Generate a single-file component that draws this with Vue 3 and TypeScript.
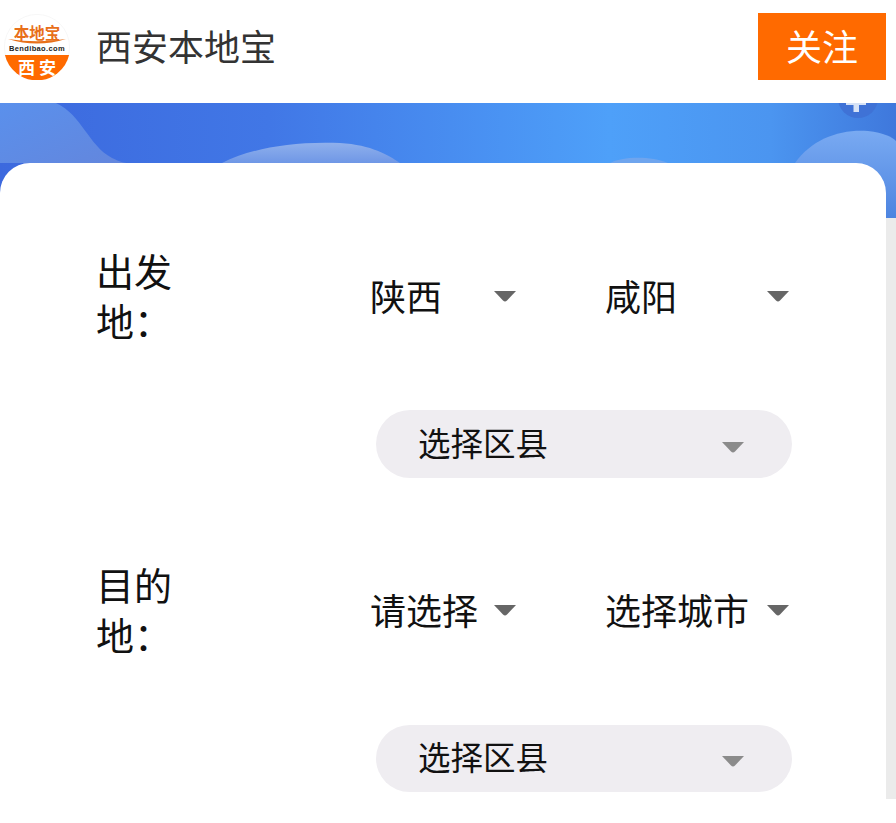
<template>
  <div class="page">
    <header class="topbar">
      <svg class="logo" viewBox="0 0 66 66">
        <circle cx="33" cy="33" r="32.6" fill="#fff" stroke="#f1f1f1" stroke-width="0.6" />
        <path d="M0.9 41 H65.1 A33 33 0 0 1 0.9 41 Z" fill="#ff6a00" />
        <path d="M4 25 Q33 34 62 25 Q33 29.5 4 25 Z" fill="#e8701a" />
        <text x="33" y="25" text-anchor="middle" class="logo-top">本地宝</text>
        <text x="33" y="37" text-anchor="middle" class="logo-mid">Bendibao.com</text>
        <text x="33" y="60" text-anchor="middle" class="logo-city">西 安</text>
      </svg>
      <span class="site-name">西安本地宝</span>
      <button class="follow"><span>关注</span></button>
    </header>

    <div class="hero">
      <svg class="hero-art" viewBox="0 0 896 115" preserveAspectRatio="none">
        <defs>
          <linearGradient id="heroBg" x1="0" y1="0" x2="1" y2="0">
            <stop offset="0" stop-color="#3c69de" />
            <stop offset="0.3" stop-color="#4177e6" />
            <stop offset="0.68" stop-color="#4ea0f9" />
            <stop offset="0.86" stop-color="#4b95f0" />
            <stop offset="1" stop-color="#3f78dc" />
          </linearGradient>
          <linearGradient id="blobLeft" x1="0" y1="0" x2="1" y2="1">
            <stop offset="0" stop-color="#5a90ec" />
            <stop offset="1" stop-color="#6386dd" />
          </linearGradient>
          <linearGradient id="blobMid" x1="0" y1="0" x2="0" y2="1">
            <stop offset="0" stop-color="#8fb0ec" />
            <stop offset="1" stop-color="#6f97e6" />
          </linearGradient>
          <linearGradient id="blobRight" x1="0" y1="0" x2="0" y2="1">
            <stop offset="0" stop-color="#79aaf2" />
            <stop offset="1" stop-color="#4d84e0" />
          </linearGradient>
        </defs>
        <rect width="896" height="115" fill="url(#heroBg)" />
        <path d="M0 0 H56 C82 12 88 42 112 55 C120 59 124 60 128 60 H0 Z" fill="url(#blobLeft)" />
        <path d="M222 60 C250 46 290 38 340 40 C372 42 388 52 400 60 Z" fill="url(#blobMid)" />
        <path d="M610 60 C620 54 650 52 668 60 Z" fill="#6fa5ee" />
        <path d="M795 60 C812 36 840 26 868 28 C884 30 892 34 896 38 V115 H795 Z" fill="url(#blobRight)" />
        <circle cx="858" cy="-5" r="20" fill="#3f72d6" />
        <rect x="853.5" y="0" width="5.5" height="9" fill="#d6e2f6" />
        <rect x="846" y="0" width="20" height="2" fill="#d6e2f6" />
      </svg>
    </div>

    <div class="content">
      <main class="card">
        <section v-for="route in routes" :key="route.label" class="route">
          <div class="route-label">{{ route.label }}</div>
          <div class="route-fields">
            <div class="inline-selects">
              <div class="inline-select first">
                <span>{{ route.province }}</span>
                <svg class="arrow" viewBox="0 0 22 11"><path d="M0 0 H22 L13 9.5 Q11 11.5 9 9.5 Z" fill="#666" /></svg>
              </div>
              <div class="inline-select second">
                <span>{{ route.city }}</span>
                <svg class="arrow" viewBox="0 0 22 11"><path d="M0 0 H22 L13 9.5 Q11 11.5 9 9.5 Z" fill="#666" /></svg>
              </div>
            </div>
            <div class="district">
              <span>选择区县</span>
              <svg class="arrow" viewBox="0 0 22 11"><path d="M0 0 H22 L13 9.5 Q11 11.5 9 9.5 Z" fill="#8b8b8b" /></svg>
            </div>
          </div>
        </section>
      </main>
      <div class="rail"></div>
    </div>
  </div>
</template>

<script setup lang="ts">
const routes = [
  { label: '出发地：', province: '陕西', city: '咸阳' },
  { label: '目的地：', province: '请选择', city: '选择城市' },
]
</script>

<style>
html,
body {
  margin: 0;
  background: #fff;
  overflow: hidden;
}
</style>

<style scoped>
.page {
  width: 896px;
  height: 823px;
  font-family: "Noto Sans CJK SC", "Noto Sans", sans-serif;
  background: #fff;
  overflow: hidden;
}

.topbar {
  height: 103px;
  display: flex;
  align-items: flex-start;
  box-sizing: border-box;
  padding: 13px 10px 0 4px;
  background: #fff;
}

.logo {
  width: 66px;
  height: 66px;
  margin-top: 1px;
  flex: none;
}

.logo-top {
  font-size: 15.5px;
  font-weight: 700;
  fill: #e8701a;
}

.logo-mid {
  font-family: "Liberation Sans", sans-serif;
  font-size: 7.5px;
  font-weight: 700;
  letter-spacing: 0.35px;
  fill: #222;
}

.logo-city {
  font-size: 17px;
  font-weight: 700;
  fill: #fff;
}

.site-name {
  margin-left: 26px;
  margin-top: -2px;
  font-size: 36px;
  line-height: 68px;
  color: #333;
}

.follow {
  margin-left: auto;
  width: 128px;
  height: 67px;
  border: 0;
  padding: 0 0 4px;
  background: #ff6a00;
  color: #fff;
  font-family: inherit;
  font-size: 36px;
}

.hero {
  height: 115px;
}

.hero-art {
  display: block;
  width: 896px;
  height: 115px;
}

.content {
  position: relative;
  display: flex;
  align-items: flex-start;
  margin-top: -55px;
}

.card {
  width: 886px;
  height: 636px;
  box-sizing: border-box;
  padding: 82px 0 0 96px;
  background: #fff;
  border-radius: 30px 30px 0 0;
}

.rail {
  width: 10px;
  height: 581px;
  margin-top: 55px;
  background: #ebebeb;
}

.route {
  display: flex;
  height: 314px;
  color: #111;
}

.route-label {
  width: 80px;
  font-size: 38px;
  line-height: 50px;
}

.route-fields {
  margin-left: 194px;
  width: 422px;
  padding-top: 2px;
}

.inline-selects {
  display: flex;
  height: 100px;
  align-items: center;
}

.inline-select {
  display: flex;
  align-items: center;
  justify-content: space-between;
  font-size: 36px;
  line-height: 50px;
  color: #111;
}

.inline-select span {
  padding-bottom: 4px;
}

.inline-select .arrow {
  margin-bottom: 2px;
}

.inline-select.first {
  width: 146px;
  margin-right: 89px;
}

.inline-select.second {
  width: 184px;
}

.district {
  display: flex;
  align-items: center;
  justify-content: space-between;
  width: 416px;
  height: 68px;
  margin: 63px 0 0 6px;
  box-sizing: border-box;
  padding: 0 48px 0 42px;
  border-radius: 34px;
  background: #efedf1;
  font-size: 32.5px;
  color: #111;
}

.district span {
  padding-bottom: 6px;
}

.district .arrow {
  margin-top: 6px;
}

.route + .route .district {
  margin-top: 64px;
  height: 67px;
}

.arrow {
  width: 22px;
  height: 11px;
  flex: none;
  filter: blur(0.5px);
}
</style>
